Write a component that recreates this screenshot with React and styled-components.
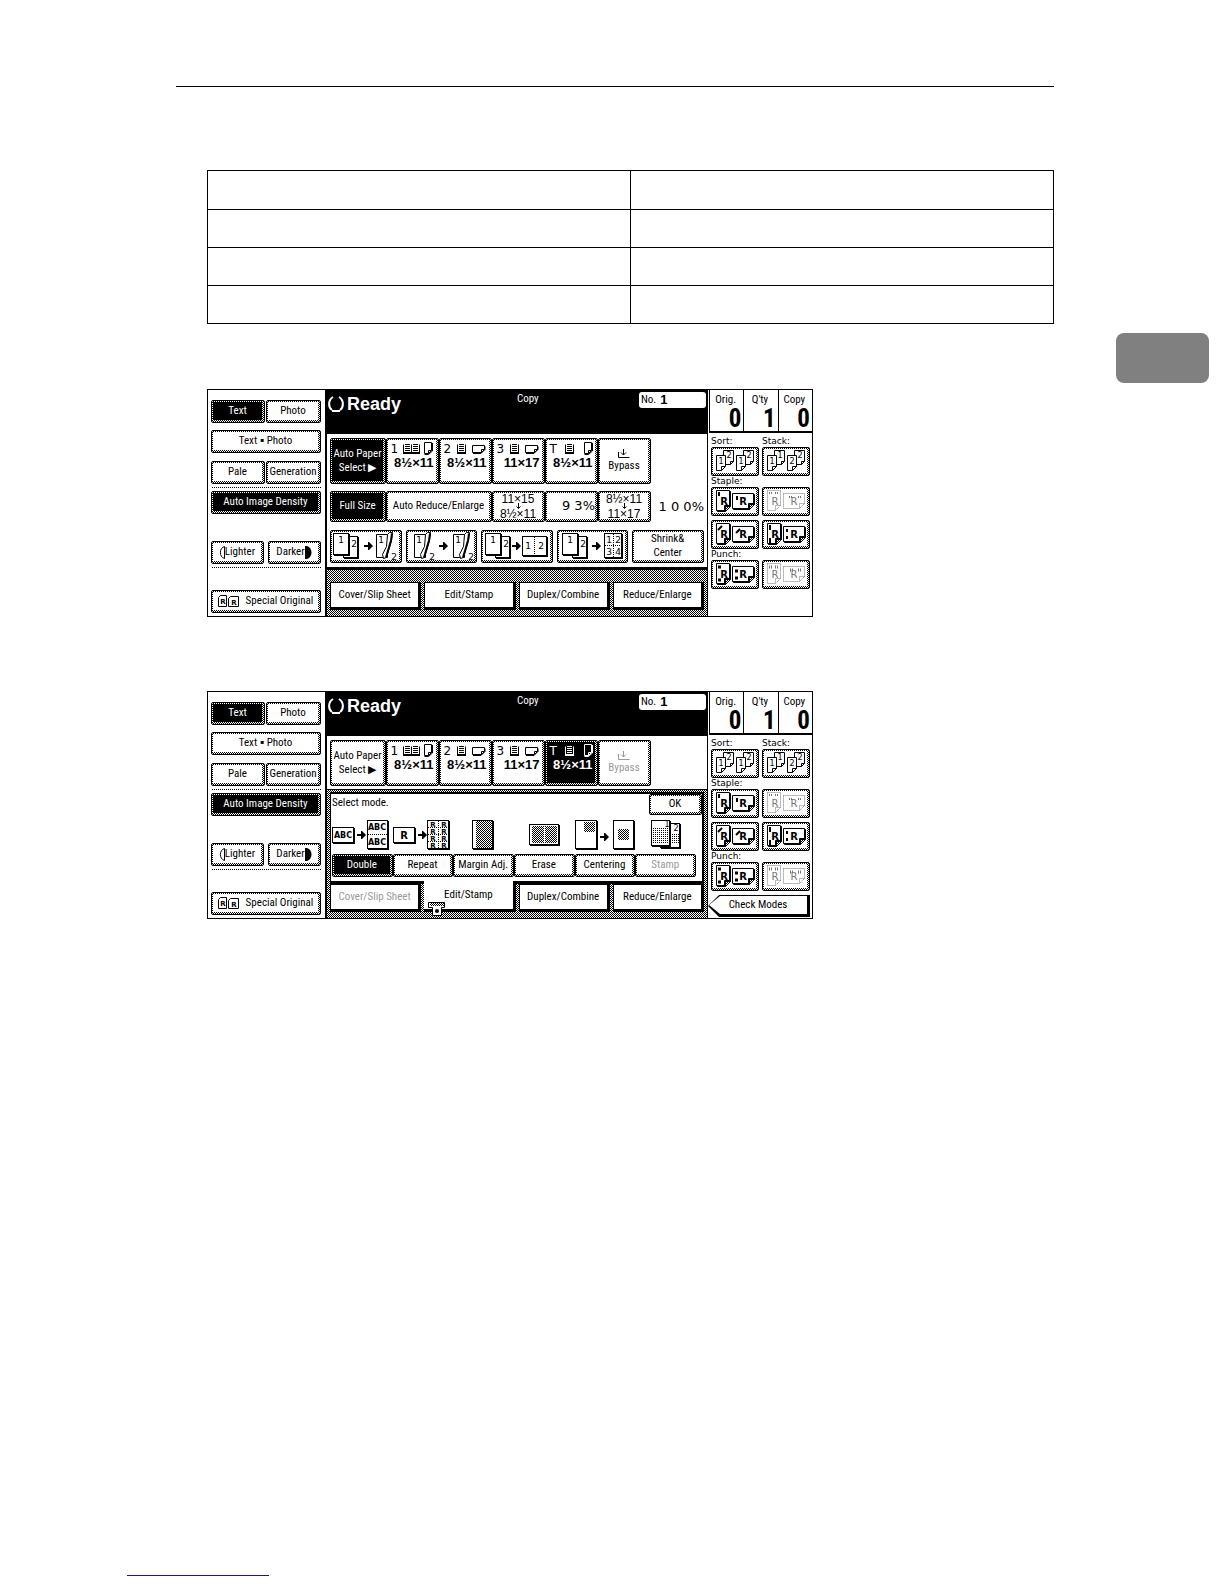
import React from "react";
import styled, { createGlobalStyle } from "styled-components";

const narrow = `"Liberation Sans Narrow", "Roboto Condensed", Lato, sans-serif`;
const wide = `"DejaVu Sans", sans-serif`;
// one pixel black and white dither, as on an LCD
const checker = `conic-gradient(#000 25%, #fff 0 50%, #000 0 75%, #fff 0) 0 0 / 2px 2px`;

const GlobalStyle = createGlobalStyle`
  * {
    box-sizing: border-box;
  }
  body {
    margin: 0;
    background: #fff;
    color: #000;
    font-family: ${narrow};
    font-size: 11px;
    line-height: 14px;
  }
  button {
    font: inherit;
    color: inherit;
    border-radius: 0;
    padding: 0;
    margin: 0;
  }
  svg {
    display: block;
    flex: none;
    overflow: visible;
  }
`;

const Page = styled.div`
  min-height: 100vh;
  display: flex;
  flex-direction: column;
  justify-content: space-between;
  padding: 86px 15px 8px 127px;
`;

const Sheet = styled.div`
  display: grid;
  grid-template-columns: 1fr 93px;
  column-gap: 62px;
  padding-left: 49px;
`;

const Body = styled.main`
  border-top: 1px solid #000;
  padding: 83px 0 0 31px;
`;

const Table = styled.table`
  width: 100%;
  border-collapse: collapse;
  table-layout: fixed;
  margin-bottom: 65px;
`;

const Cell = styled.td`
  height: 38px;
  padding: 0;
  border: 1px solid #000;

  tr:first-child > & {
    height: 39px;
  }
`;

const ChapterTab = styled.aside`
  height: 50px;
  margin-top: 247px;
  border-radius: 8px;
  background: #808080;
`;

const FooterLine = styled.div`
  width: 142px;
  height: 1px;
  background: #191970;
`;

const Panel = styled.section`
  display: grid;
  grid-template-columns: 117px 1fr 104px;
  max-width: 606px;
  border: 1px solid #000;
  margin-bottom: 74px;
`;

const Side = styled.div`
  padding: 10px 4px 3px 3px;
`;

const SideRow = styled.div`
  display: grid;
  grid-template-columns: ${(props) => props.$cols || "1fr"};
  gap: ${(props) => props.$gap || 1}px;
  height: 23px;
  margin-bottom: ${(props) => props.$after || 0}px;
`;

const DottedLine = styled.div`
  height: 1px;
  margin-bottom: ${(props) => props.$after}px;
  background: ${checker};
`;

const Key = styled.button`
  display: flex;
  flex-direction: ${(props) => (props.$column ? "column" : "row")};
  align-items: center;
  justify-content: ${(props) => (props.$end ? "flex-end" : "center")};
  gap: ${(props) => props.$gap || 0}px;
  min-width: 0;
  border: 1px solid #000;
  border-radius: 2px;
  padding: 1px 2px 2px 1px;
  background: ${(props) =>
      props.$on
        ? "linear-gradient(#000, #000)"
        : "linear-gradient(#fff, #fff)"}
      content-box,
    ${checker};
  color: ${(props) => (props.$on ? "#fff" : props.$dim ? "#999" : "#000")};
  white-space: nowrap;
`;

const Center = styled.div`
  display: flex;
  flex-direction: column;
  border-left: 2px solid #000;
  border-right: 1px solid #000;
`;

const Header = styled.header`
  display: flex;
  align-items: flex-start;
  height: 44px;
  padding: 2px 1px 0 1px;
  background: #000;
  color: #fff;
`;

const Status = styled.div`
  display: flex;
  align-items: center;
  gap: 3px;
  width: 189px;
  height: 24px;
  font: bold 18px/24px "Liberation Sans", sans-serif;
`;

const JobNumber = styled.div`
  display: flex;
  gap: 4px;
  width: 67px;
  height: 16px;
  margin-left: auto;
  padding: 0 2px;
  border-radius: 3px;
  background: #fff;
  color: #000;
  line-height: 16px;

  b {
    font: bold 13px/16px "Liberation Sans", sans-serif;
  }
`;

const PaperRow = styled.div`
  display: grid;
  grid-template-columns: 56px repeat(5, 53px);
  height: 46px;
  margin: 4px 3px 0;
`;

const PaperTop = styled.div`
  display: flex;
  align-items: center;
  justify-content: space-between;
  width: 43px;
  height: 14px;
  font: 12px/14px ${wide};
`;

const PaperSize = styled.div`
  width: 43px;
  text-align: right;
  font: bold 13px/14px "Liberation Sans", sans-serif;
`;

const PaperBody = styled.div`
  padding-bottom: 10px;
`;

const RatioRow = styled.div`
  display: grid;
  grid-template-columns: 56px 106px repeat(3, 53px) 1fr;
  height: 31px;
  margin: 7px 3px 0;
`;

const RatioStack = styled.span`
  display: flex;
  flex-direction: column;
  align-items: center;
  font: 12px/10px "Liberation Sans", sans-serif;
`;

const Percent = styled.span`
  align-self: center;
  justify-self: end;
  font: 13px/14px ${wide};
`;

const ModeRow = styled.div`
  display: grid;
  grid-template-columns: repeat(5, 1fr);
  gap: 4px;
  height: 33px;
  margin: 8px 3px 4px;
`;

const TabBar = styled.div`
  flex: 1;
  border-top: 3px solid #000;
  padding: 12px 3px 6px;
  background: ${checker};
`;

const Tabs = styled.div`
  display: grid;
  grid-template-columns: repeat(4, 1fr);
  gap: 3px;
  height: 28px;
`;

const Tab = styled.button`
  border: 1px solid #000;
  border-width: ${(props) => (props.$open ? "0 3px 3px 0" : "1px 3px 3px 1px")};
  margin-top: ${(props) => (props.$open ? -3 : 0)}px;
  background: #fff;
  color: ${(props) => (props.$dim ? "#999" : "#000")};
  white-space: nowrap;
`;

const TabLabel = styled.span`
  position: relative;
`;

const Clip = styled.svg`
  position: absolute;
  left: -16px;
  top: 14px;
`;

const Backdrop = styled.div`
  flex: 1;
  margin-top: 3px;
  border-top: 1px solid #000;
  padding: 2px 3px 6px;
  background: ${checker};
`;

const Window = styled.div`
  border: solid #000;
  border-width: 2px 2px 3px 1px;
  background: #fff;
`;

const WindowHead = styled.div`
  display: flex;
  justify-content: space-between;
  padding-left: 1px;
  line-height: 18px;
`;

const OkKey = styled(Key)`
  width: 53px;
  height: 21px;
`;

const Modes = styled.div`
  display: grid;
  grid-template-columns: repeat(6, 1fr);
  row-gap: 3px;
  padding: 4px 6px 4px 1px;
`;

const ModeKey = styled(Key)`
  height: 23px;
`;

const Finisher = styled.div`
  display: flex;
  flex-direction: column;
`;

const Counters = styled.div`
  display: grid;
  grid-template-columns: repeat(3, 1fr);
  height: 43px;
  margin-left: 1px;
  border-bottom: 2px solid #000;
`;

const Counter = styled.div`
  border-left: 1px solid #000;
  padding: 3px 2px 0 0;
  text-align: center;

  strong {
    display: block;
    text-align: right;
    font: bold 25px/24px ${narrow};
  }
`;

const FinishGrid = styled.div`
  display: grid;
  grid-template-columns: 48px 48px;
  column-gap: 3px;
  padding: 3px 0 0 3px;
`;

const FinishLabel = styled.div`
  height: 11px;
  font: 9px/11px ${wide};
`;

const FinishKey = styled(Key)`
  height: 29px;
  margin-bottom: ${(props) => props.$after || 0}px;
`;

const CheckKey = styled.button`
  width: 102px;
  height: 22px;
  margin-top: 4px;
  border: 0;
  padding: 1px 3px 3px 1px;
  background: #000;
  clip-path: polygon(0 50%, 11px 0, 100% 0, 100% 100%, 11px 100%);

  span {
    display: block;
    line-height: 18px;
    background: #fff;
    clip-path: polygon(0 50%, 11px 0, 100% 0, 100% 100%, 11px 100%);
  }
`;

const Glyph = styled.text`
  font: ${(props) => (props.$bold ? "bold " : "")}${(props) => props.$size || 9}px
    ${wide};
  text-anchor: middle;
  fill: ${(props) => props.$fill || "#000"};
  stroke: none;
`;

/* ---- drawings ---- */

const Dither = ({ x, y, w, h, id }) => (
  <>
    <defs>
      <pattern id={id} width="2" height="2" patternUnits="userSpaceOnUse">
        <rect width="2" height="2" fill="#fff" />
        <rect width="1" height="1" />
        <rect x="1" y="1" width="1" height="1" />
      </pattern>
    </defs>
    <rect x={x} y={y} width={w} height={h} fill={`url(#${id})`} />
  </>
);

// sheet with a heavier right and bottom edge
const Leaf = ({ x, y, w, h }) => (
  <>
    <rect x={x + 1} y={y + 1} width={w} height={h} fill="#000" />
    <rect x={x} y={y} width={w} height={h} fill="#000" />
    <rect x={x + 1} y={y + 1} width={w - 2} height={h - 2} fill="#fff" />
  </>
);

const Arrow = ({ x, y }) => (
  <path
    d={`M${x} ${y - 1}h4v-3h1l4 4-4 4h-1v-3h-4z`}
    fill="#000"
    stroke="none"
  />
);

// sheet being flipped over its right edge
const Turned = ({ x }) => (
  <g stroke="#000" fill="#fff">
    <path d={`M${x + 0.5} 2.5h11v23h-11z`} />
    <path d={`M${x + 11.5} 2.5l2-2h3l-1 8-5 17-3 1-1-4 4-8z`} />
    <path d={`M${x + 16} 1.5l-1 7-5 17`} strokeWidth="2" fill="none" />
    <Glyph x={x + 5} y="11">
      1
    </Glyph>
    <Glyph x={x + 18} y="28">
      2
    </Glyph>
  </g>
);

const TwoSheets = ({ x }) => (
  <>
    <Leaf x={x + 10} y={4} w={15} h={22} />
    <Leaf x={x} y={1} w={16} h={22} />
    <Glyph x={x + 8} y="11">
      1
    </Glyph>
    <Glyph x={x + 21} y="15">
      2
    </Glyph>
  </>
);

const SimplexToDuplex = () => (
  <svg width="66" height="28">
    <TwoSheets x={1} />
    <Arrow x={32} y={14} />
    <Turned x={44} />
  </svg>
);

const DuplexToDuplex = () => (
  <svg width="66" height="28">
    <Turned x={6} />
    <Arrow x={31} y={14} />
    <Turned x={45} />
  </svg>
);

const Combine2 = () => (
  <svg width="66" height="28">
    <TwoSheets x={2} />
    <Arrow x={29} y={14} />
    <Leaf x={39} y={4} w={25} h={20} />
    <path d="M51.5 5v18" stroke="#000" strokeDasharray="1 1" />
    <Glyph x="45" y="17">
      1
    </Glyph>
    <Glyph x="58" y="17">
      2
    </Glyph>
  </svg>
);

const Combine4 = () => (
  <svg width="66" height="28">
    <TwoSheets x={3} />
    <Arrow x={33} y={14} />
    <Leaf x={45} y={1} w={18} h={25} />
    <path d="M54.5 2v23M46 13.5h16" stroke="#000" strokeDasharray="1 1" />
    <Glyph x="50" y="11">
      1
    </Glyph>
    <Glyph x="59" y="11">
      2
    </Glyph>
    <Glyph x="50" y="23">
      3
    </Glyph>
    <Glyph x="59" y="23">
      4
    </Glyph>
  </svg>
);

const foldedPath = (x, y, w, h, f) =>
  `M${x + 0.5} ${y + 0.5}h${w}v${h - f}l${-f} ${f}h${f - w}z` +
  `M${x + w + 0.5} ${y + h - f + 0.5}h${-f}v${f}`;

const SheetIcon = ({ turned }) => (
  <svg width={turned ? 14 : 9} height="13" fill="none" stroke="currentColor">
    {turned ? (
      <>
        <path d={foldedPath(0, 3, 12, 7, 3)} />
        <path d="M1 11.5h8l4-4v-3" />
      </>
    ) : (
      <>
        <path d={foldedPath(0, 0, 7, 11, 3)} />
        <path d="M8.5 1v8l-4 3.5h-4" />
      </>
    )}
  </svg>
);

const Tray = ({ tandem }) => (
  <svg width={tandem ? 17 : 10} height="10" fill="none" stroke="currentColor">
    <path d="M.5 .5v8.5M8.5 .5v8.5" />
    <path d="M0 9h9" strokeWidth="2" />
    <path d="M2 .5h5M2 2.5h5M2 4.5h5M2 6.5h5" />
    {tandem && (
      <>
        <path d="M16.5 .5v8.5" />
        <path d="M8 9h9" strokeWidth="2" />
        <path d="M10 .5h5M10 2.5h5M10 4.5h5M10 6.5h5" />
      </>
    )}
  </svg>
);

const PowerRing = () => (
  <svg width="16" height="16" fill="none" stroke="#fff" strokeWidth="2">
    <path d="M5 1C0 4 0 11 4 14M11 1c5 3 5 10 1 13M4 15h8" />
  </svg>
);

const DownArrow = () => (
  <svg width="5" height="5" fill="none" stroke="#000">
    <path d="M2.5 -1v5M.5 2.5l2 2 2-2" />
  </svg>
);

const Bypass = () => (
  <svg width="12" height="9" fill="none" stroke="currentColor">
    <path d="M.5 3v5.5h11M5.5 0v6M3 3.5l2.5 2.5L8 3.5" />
  </svg>
);

const Folded = ({ x, y, w, h, f, dim }) =>
  dim ? (
    <path d={foldedPath(x, y, w, h, f)} strokeDasharray="1 1" />
  ) : (
    <>
      <path d={foldedPath(x + 1, y + 1, w, h, f)} fill="#000" />
      <path d={foldedPath(x, y, w, h, f)} />
    </>
  );

const SortIcon = ({ labels }) => (
  <svg width="43" height="24" stroke="#000" fill="#fff">
    {[0, 20].map((x, i) => (
      <g key={x}>
        <path d={foldedPath(x + 10, 1, 10, 14, 3)} />
        <Glyph x={x + 16} y="9" $size="8">
          {labels[i][1]}
        </Glyph>
        <path d={foldedPath(x + 3, 6, 9, 15, 4)} />
        <Glyph x={x + 8} y="15" $size="8">
          {labels[i][0]}
        </Glyph>
      </g>
    ))}
  </svg>
);

const marks = {
  corner: ["M6 3v4", "M24 7v4"],
  slant: ["M5 8l4-4", "M23 11l4-4"],
  left: ["M6 3v5M6 16v5", "M23 7v3M23 14v3"],
  topPair: ["M5 4h3M11 4h3", "M25 8h4M34 8h4"],
  punch: ["M5 5h3M5 18h3", "M22 9h3M22 16h3"],
  punchTop: ["M5 5h3M11 5h3", "M26 8h3M34 8h3"],
};

const FinishIcon = ({ kind, dim }) => {
  const color = dim ? "#777" : "#000";
  return (
    <svg width="43" height="24" stroke={color} fill="#fff">
      <Folded x={3} y={1} w={13} h={20} f={5} dim={dim} />
      <Folded x={19} y={4} w={21} h={15} f={5} dim={dim} />
      <g
        strokeWidth={kind.startsWith("punch") ? 3 : 2}
        strokeDasharray={dim ? "1 1" : "none"}
      >
        <path d={marks[kind][0]} />
        <path d={marks[kind][1]} />
      </g>
      <Glyph x="11" y="16" $size="10" $bold={!dim} $fill={color}>
        R
      </Glyph>
      <Glyph x="30" y="16" $size="10" $bold={!dim} $fill={color}>
        R
      </Glyph>
    </svg>
  );
};

const OriginalIcon = () => (
  <svg width="22" height="12" fill="#fff" stroke="#000">
    <path d="M.5 2.5l2-2h6v11h-8zM10.5 3.5l2-2h8v10h-10z" />
    <Glyph x="5" y="9" $size="7" $bold>
      R
    </Glyph>
    <Glyph x="16" y="10" $size="7" $bold>
      R
    </Glyph>
  </svg>
);

const DoubleIcon = () => (
  <svg width="60" height="32">
    <Leaf x={0} y={8} w={22} h={16} />
    <Glyph x="11" y="19" $size="8" $bold>
      ABC
    </Glyph>
    <Arrow x={25} y={16} />
    <Leaf x={35} y={1} w={21} h={29} />
    <path d="M36 15.5h19" stroke="#000" strokeDasharray="1 1" />
    <Glyph x="45" y="11" $size="8" $bold>
      ABC
    </Glyph>
    <Glyph x="45" y="26" $size="8" $bold>
      ABC
    </Glyph>
  </svg>
);

const RepeatIcon = () => (
  <svg width="60" height="32">
    <Leaf x={0} y={8} w={22} h={16} />
    <Glyph x="11" y="20" $size="10" $bold>
      R
    </Glyph>
    <Arrow x={25} y={16} />
    <Leaf x={34} y={1} w={22} h={29} />
    <path
      d="M45.5 2v27M35 8.5h20M35 15.5h20M35 22.5h20"
      stroke="#000"
      strokeDasharray="1 1"
    />
    {[8, 15, 22, 29].map((y) => (
      <React.Fragment key={y}>
        <Glyph x="40" y={y} $size="7" $bold>
          R
        </Glyph>
        <Glyph x="51" y={y} $size="7" $bold>
          R
        </Glyph>
      </React.Fragment>
    ))}
  </svg>
);

const MarginIcon = () => (
  <svg width="60" height="32">
    <Leaf x={19} y={1} w={21} h={29} />
    <Dither id="margin" x={23} y={2} w={16} h={27} />
  </svg>
);

const EraseIcon = () => (
  <svg width="60" height="32">
    <Leaf x={15} y={5} w={30} h={21} />
    <Dither id="erase-l" x={18} y={7} w={12} h={17} />
    <Dither id="erase-r" x={31} y={7} w={12} h={17} />
  </svg>
);

const CenteringIcon = () => (
  <svg width="60" height="32">
    <Leaf x={0} y={1} w={22} h={29} />
    <Dither id="center-a" x={9} y={3} w={11} h={10} />
    <Arrow x={25} y={18} />
    <Leaf x={38} y={1} w={21} h={29} />
    <Dither id="center-b" x={43} y={10} w={11} h={11} />
  </svg>
);

const StampIcon = () => (
  <svg width="60" height="32">
    <Leaf x={25} y={4} w={20} h={25} />
    <path
      d="M37 15.5h7M37 17.5h7M37 19.5h7M37 21.5h7M37 23.5h7"
      stroke="#000"
      strokeDasharray="1 1"
    />
    <Leaf x={16} y={1} w={19} h={26} />
    <Glyph x="32" y="8" $size="8">
      1
    </Glyph>
    <Glyph x="41" y="12" $size="8">
      2
    </Glyph>
    <path
      d="M18 9.5h15M18 11.5h15M18 13.5h15M18 15.5h15M18 17.5h15M18 19.5h15M18 21.5h15M18 23.5h15"
      stroke="#000"
      strokeDasharray="1 1"
    />
  </svg>
);

const ClipMark = () => (
  <Clip width="18" height="15">
    <path d="M.5 .5h16v5h-3v8h-9v-8h-4z" fill="#fff" stroke="#000" />
    <Dither id="clip" x={2} y={1} w={14} h={3} />
    <circle cx="9" cy="9" r="2" />
  </Clip>
);

/* ---- panel parts ---- */

const Density = () => (
  <Side>
    <SideRow $cols="54px 1fr" $after={7}>
      <Key $on>Text</Key>
      <Key>Photo</Key>
    </SideRow>
    <SideRow $after={8}>
      <Key>Text ▪ Photo</Key>
    </SideRow>
    <SideRow $cols="54px 1fr" $after={3}>
      <Key>Pale</Key>
      <Key>Generation</Key>
    </SideRow>
    <DottedLine $after={3} />
    <SideRow $after={27}>
      <Key $on>Auto Image Density</Key>
    </SideRow>
    <SideRow $cols="1fr 1fr" $gap={4} $after={3}>
      <Key>
        <svg width="6" height="13" fill="none" stroke="#000">
          <path d="M5.5 .5v12C0 11 0 2 5.5 .5z" />
        </svg>
        Lighter
      </Key>
      <Key>
        Darker
        <svg width="7" height="13">
          <path d="M0 0h2c6 2 6 11 0 13H0z" />
        </svg>
      </Key>
    </SideRow>
    <DottedLine $after={22} />
    <SideRow>
      <Key $gap={6}>
        <OriginalIcon />
        Special Original
      </Key>
    </SideRow>
  </Side>
);

const papers = [
  { tray: "1", size: "8½×11", tandem: true },
  { tray: "2", size: "8½×11", turned: true },
  { tray: "3", size: "11×17", turned: true },
  { tray: "T", size: "8½×11" },
];

const Papers = ({ selected }) => (
  <PaperRow>
    <Key $on={selected === "auto"} $column>
      <span>Auto Paper</span>
      <span>Select ▶</span>
    </Key>
    {papers.map((p) => (
      <Key key={p.tray} $on={selected === p.tray}>
        <PaperBody>
          <PaperTop>
            {p.tray}
            <Tray tandem={p.tandem} />
            <SheetIcon turned={p.turned} />
          </PaperTop>
          <PaperSize>{p.size}</PaperSize>
        </PaperBody>
      </Key>
    ))}
    <Key $column $gap={1} $dim={selected === "T"}>
      <Bypass />
      Bypass
    </Key>
  </PaperRow>
);

const Top = () => (
  <Header>
    <Status>
      <PowerRing />
      Ready
    </Status>
    <span>Copy</span>
    <JobNumber>
      No. <b>1</b>
    </JobNumber>
  </Header>
);

const Finishing = ({ check }) => (
  <Finisher>
    <Counters>
      <Counter>
        Orig.<strong>0</strong>
      </Counter>
      <Counter>
        Q'ty<strong>1</strong>
      </Counter>
      <Counter>
        Copy<strong>0</strong>
      </Counter>
    </Counters>
    <FinishGrid>
      <FinishLabel>Sort:</FinishLabel>
      <FinishLabel>Stack:</FinishLabel>
      <FinishKey>
        <SortIcon labels={["12", "12"]} />
      </FinishKey>
      <FinishKey>
        <SortIcon labels={["11", "22"]} />
      </FinishKey>
      <FinishLabel>Staple:</FinishLabel>
      <span />
      <FinishKey $after={4}>
        <FinishIcon kind="corner" />
      </FinishKey>
      <FinishKey $after={4}>
        <FinishIcon kind="topPair" dim />
      </FinishKey>
      <FinishKey>
        <FinishIcon kind="slant" />
      </FinishKey>
      <FinishKey>
        <FinishIcon kind="left" />
      </FinishKey>
      <FinishLabel>Punch:</FinishLabel>
      <span />
      <FinishKey>
        <FinishIcon kind="punch" />
      </FinishKey>
      <FinishKey>
        <FinishIcon kind="punchTop" dim />
      </FinishKey>
    </FinishGrid>
    {check && (
      <CheckKey>
        <span>Check Modes</span>
      </CheckKey>
    )}
  </Finisher>
);

const CopyPanel = () => (
  <Panel>
    <Density />
    <Center>
      <Top />
      <Papers selected="auto" />
      <RatioRow>
        <Key $on>Full Size</Key>
        <Key>Auto Reduce/Enlarge</Key>
        <Key>
          <RatioStack>
            11×15
            <DownArrow />
            8½×11
          </RatioStack>
        </Key>
        <Key $end>
          <Percent>9 3%</Percent>
        </Key>
        <Key>
          <RatioStack>
            8½×11
            <DownArrow />
            11×17
          </RatioStack>
        </Key>
        <Percent>1 0 0%</Percent>
      </RatioRow>
      <ModeRow>
        <Key>
          <SimplexToDuplex />
        </Key>
        <Key>
          <DuplexToDuplex />
        </Key>
        <Key>
          <Combine2 />
        </Key>
        <Key>
          <Combine4 />
        </Key>
        <Key $column>
          <span>Shrink&amp;</span>
          <span>Center</span>
        </Key>
      </ModeRow>
      <TabBar>
        <Tabs>
          <Tab>Cover/Slip Sheet</Tab>
          <Tab>Edit/Stamp</Tab>
          <Tab>Duplex/Combine</Tab>
          <Tab>Reduce/Enlarge</Tab>
        </Tabs>
      </TabBar>
    </Center>
    <Finishing />
  </Panel>
);

const EditPanel = () => (
  <Panel>
    <Density />
    <Center>
      <Top />
      <Papers selected="T" />
      <Backdrop>
        <Window>
          <WindowHead>
            Select mode.
            <OkKey>OK</OkKey>
          </WindowHead>
          <Modes>
            <DoubleIcon />
            <RepeatIcon />
            <MarginIcon />
            <EraseIcon />
            <CenteringIcon />
            <StampIcon />
            <ModeKey $on>Double</ModeKey>
            <ModeKey>Repeat</ModeKey>
            <ModeKey>Margin Adj.</ModeKey>
            <ModeKey>Erase</ModeKey>
            <ModeKey>Centering</ModeKey>
            <ModeKey $dim>Stamp</ModeKey>
          </Modes>
        </Window>
        <Tabs>
          <Tab $dim>Cover/Slip Sheet</Tab>
          <Tab $open>
            <TabLabel>
              Edit/Stamp
              <ClipMark />
            </TabLabel>
          </Tab>
          <Tab>Duplex/Combine</Tab>
          <Tab>Reduce/Enlarge</Tab>
        </Tabs>
      </Backdrop>
    </Center>
    <Finishing check />
  </Panel>
);

const App = () => (
  <>
    <GlobalStyle />
    <Page>
      <Sheet>
        <Body>
          <Table>
            <tbody>
              {[0, 1, 2, 3].map((row) => (
                <tr key={row}>
                  <Cell />
                  <Cell />
                </tr>
              ))}
            </tbody>
          </Table>
          <CopyPanel />
          <EditPanel />
        </Body>
        <ChapterTab />
      </Sheet>
      <FooterLine />
    </Page>
  </>
);

export default App;
